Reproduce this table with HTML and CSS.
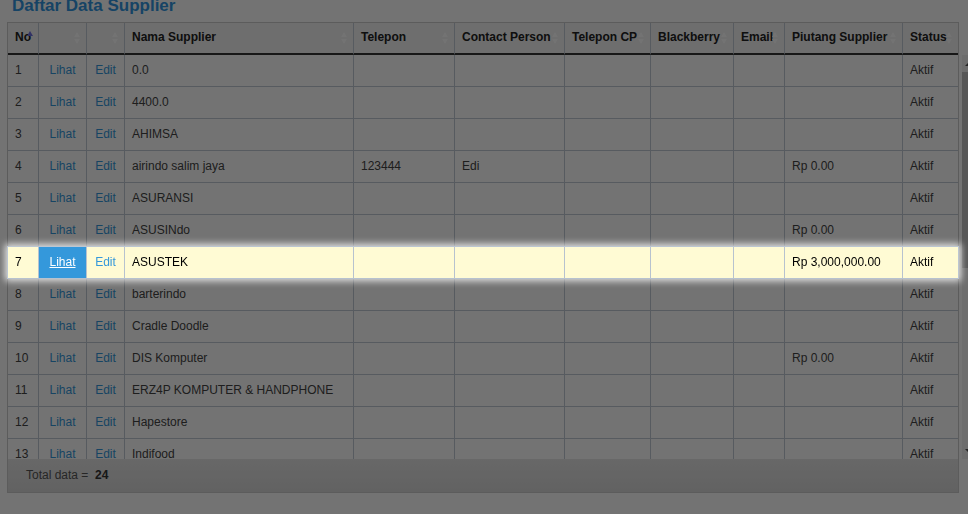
FILE: index.html
```html
<!DOCTYPE html>
<html lang="id">
<head>
  <meta charset="UTF-8">
  <meta name="viewport" content="width=device-width, initial-scale=1">
  <title>Daftar Data Supplier</title>
  <link rel="stylesheet" href="styles.css">
</head>
<body>
  <div class="page">
    <h2 class="page-title">Daftar Data Supplier</h2>

    <div class="panel">
      <!-- fixed header -->
      <div class="panel-head">
        <table class="grid">
          <colgroup>
            <col class="w-no"><col class="w-act"><col class="w-edit"><col class="w-nama">
            <col class="w-telp"><col class="w-cp"><col class="w-telpcp"><col class="w-bb">
            <col class="w-email"><col class="w-piutang"><col class="w-status">
          </colgroup>
          <thead>
            <tr>
              <th class="sort-asc">No</th>
              <th class="sort"></th>
              <th class="sort"></th>
              <th class="sort">Nama Supplier</th>
              <th class="sort">Telepon</th>
              <th class="sort">Contact Person</th>
              <th class="sort">Telepon CP</th>
              <th class="sort">Blackberry</th>
              <th class="sort">Email</th>
              <th class="sort">Piutang Supplier</th>
              <th class="sort">Status</th>
            </tr>
          </thead>
        </table>
      </div>

      <!-- scrolling body -->
      <div class="panel-body">
        <div class="body-scroll">
          <table class="grid">
            <colgroup>
              <col class="w-no"><col class="w-act"><col class="w-edit"><col class="w-nama">
              <col class="w-telp"><col class="w-cp"><col class="w-telpcp"><col class="w-bb">
              <col class="w-email"><col class="w-piutang"><col class="w-status">
            </colgroup>
            <tbody>
              <tr><td>1</td><td class="act"><a href="#">Lihat</a></td><td class="act"><a href="#">Edit</a></td><td>0.0</td><td></td><td></td><td></td><td></td><td></td><td></td><td>Aktif</td></tr>
              <tr><td>2</td><td class="act"><a href="#">Lihat</a></td><td class="act"><a href="#">Edit</a></td><td>4400.0</td><td></td><td></td><td></td><td></td><td></td><td></td><td>Aktif</td></tr>
              <tr><td>3</td><td class="act"><a href="#">Lihat</a></td><td class="act"><a href="#">Edit</a></td><td>AHIMSA</td><td></td><td></td><td></td><td></td><td></td><td></td><td>Aktif</td></tr>
              <tr><td>4</td><td class="act"><a href="#">Lihat</a></td><td class="act"><a href="#">Edit</a></td><td>airindo salim jaya</td><td>123444</td><td>Edi</td><td></td><td></td><td></td><td>Rp 0.00</td><td>Aktif</td></tr>
              <tr><td>5</td><td class="act"><a href="#">Lihat</a></td><td class="act"><a href="#">Edit</a></td><td>ASURANSI</td><td></td><td></td><td></td><td></td><td></td><td></td><td>Aktif</td></tr>
              <tr><td>6</td><td class="act"><a href="#">Lihat</a></td><td class="act"><a href="#">Edit</a></td><td>ASUSINdo</td><td></td><td></td><td></td><td></td><td></td><td>Rp 0.00</td><td>Aktif</td></tr>
              <tr class="is-focus"><td>7</td><td class="act is-hover"><a href="#">Lihat</a></td><td class="act"><a href="#">Edit</a></td><td>ASUSTEK</td><td></td><td></td><td></td><td></td><td></td><td>Rp 3,000,000.00</td><td>Aktif</td></tr>
              <tr><td>8</td><td class="act"><a href="#">Lihat</a></td><td class="act"><a href="#">Edit</a></td><td>barterindo</td><td></td><td></td><td></td><td></td><td></td><td></td><td>Aktif</td></tr>
              <tr><td>9</td><td class="act"><a href="#">Lihat</a></td><td class="act"><a href="#">Edit</a></td><td>Cradle Doodle</td><td></td><td></td><td></td><td></td><td></td><td></td><td>Aktif</td></tr>
              <tr><td>10</td><td class="act"><a href="#">Lihat</a></td><td class="act"><a href="#">Edit</a></td><td>DIS Komputer</td><td></td><td></td><td></td><td></td><td></td><td>Rp 0.00</td><td>Aktif</td></tr>
              <tr><td>11</td><td class="act"><a href="#">Lihat</a></td><td class="act"><a href="#">Edit</a></td><td>ERZ4P KOMPUTER &amp; HANDPHONE</td><td></td><td></td><td></td><td></td><td></td><td></td><td>Aktif</td></tr>
              <tr><td>12</td><td class="act"><a href="#">Lihat</a></td><td class="act"><a href="#">Edit</a></td><td>Hapestore</td><td></td><td></td><td></td><td></td><td></td><td></td><td>Aktif</td></tr>
              <tr><td>13</td><td class="act"><a href="#">Lihat</a></td><td class="act"><a href="#">Edit</a></td><td>Indifood</td><td></td><td></td><td></td><td></td><td></td><td></td><td>Aktif</td></tr>
            </tbody>
          </table>
        </div>
        <div class="vscroll">
          <span class="vscroll-btn up"></span>
          <span class="vscroll-thumb"></span>
          <span class="vscroll-track"></span>
          <span class="vscroll-btn down"></span>
        </div>
      </div>

      <div class="panel-foot">Total data = &nbsp;<b>24</b></div>
    </div>
  </div>

  <!-- guided tour layers -->
  <div class="tour-overlay"></div>
  <div class="tour-helper"></div>

  <script>
    // Put the helper layer under the row the tour points at
    const focusRow = document.querySelector('tr.is-focus');
    const helper = document.querySelector('.tour-helper');
    const r = focusRow.getBoundingClientRect();
    helper.style.left = (r.left - 1) + 'px';
    helper.style.top = (r.top - 1) + 'px';
    helper.style.width = (r.width + 2) + 'px';
    helper.style.height = (r.height + 1) + 'px';
  </script>
</body>
</html>
```

FILE: styles.css
```css
*, *::before, *::after { box-sizing: border-box; }
html, body { overflow: hidden; }
body {
  margin: 0; background: #fff; color: #444;
  font: 12px/15px "Liberation Sans", Arial, sans-serif;
}
.page { padding-left: 7px; }
.page-title {
  margin: -4px 0 6px 5px;
  font-size: 17px; line-height: 20px; font-weight: bold;
  color: #3296e0;
}

/* Panel */
.panel { width: 952px; border: 1px solid #ccc; }
.panel-body { display: flex; height: 404px; }
.body-scroll { flex: none; width: 950px; overflow: hidden; }
.panel-foot {
  height: 33px; padding: 0 18px; line-height: 33px;
  background: linear-gradient(#e6e6e6, #d9d9d9); color: #555;
}
.panel-foot b { color: #333; }

/* Grid */
.grid {
  width: 950px; table-layout: fixed;
  border-collapse: separate; border-spacing: 0;
}
.w-no { width: 30px; }
.w-act { width: 48px; }
.w-edit { width: 38px; }
.w-nama { width: 229px; }
.w-telp { width: 101px; }
.w-cp { width: 110px; }
.w-telpcp { width: 86px; }
.w-bb { width: 83px; }
.w-email { width: 51px; }
.w-piutang { width: 118px; }
.w-status { width: 56px; }
.grid th, .grid td {
  padding: 8px 7px; text-align: left; white-space: nowrap;
  border-left: 1px solid #c2cad4; border-bottom: 1px solid #c2cad4;
}
.grid th:first-child, .grid td:first-child { border-left: 0; }
.grid th {
  position: relative; padding: 7px 7px 8px;
  background: #f3f3f3; color: #222; font-weight: bold;
  border-bottom: 2px solid #333;
}
.grid a { color: #3498db; text-decoration: none; }
.grid td.act { padding-left: 0; padding-right: 0; text-align: center; }

/* Sort arrows */
.grid th.sort::before, .grid th.sort::after, .grid th.sort-asc::before {
  content: ""; position: absolute; right: 6px;
  border-left: 3px solid transparent; border-right: 3px solid transparent;
}
.grid th.sort::before { top: 9px; border-bottom: 5px solid #fff; }
.grid th.sort::after { top: 16px; border-top: 5px solid #fff; }
.grid th.sort-asc::before { top: 8px; right: 5px; border-bottom: 5px solid #7070e0; }

/* Fake scrollbar of the body */
.vscroll {
  flex: none; width: 17px; margin-left: 4px;
  display: flex; flex-direction: column; background: #f1f1f1;
}
.vscroll-btn { height: 17px; display: flex; align-items: center; padding-left: 3px; }
.vscroll-btn::before {
  content: ""; border-left: 4px solid transparent; border-right: 4px solid transparent;
}
.vscroll-btn.up::before { border-bottom: 4px solid #505050; }
.vscroll-btn.down::before { border-top: 4px solid #505050; }
.vscroll-thumb { height: 196px; background: #c1c1c1; }
.vscroll-track { flex: 1; }

/* Guided tour */
.tour-overlay {
  position: fixed; inset: 0; z-index: 10;
  background: rgba(0, 0, 0, .55);
}
.tour-helper {
  position: absolute; z-index: 11;
  background: #fffbd4; border: 1px solid #bcc6d2;
  box-shadow: 0 0 7px 2px rgba(255, 255, 255, .8);
}
.grid tr.is-focus td {
  position: relative; z-index: 12; color: #000;
  border-left-color: #b7c2cf; border-bottom-color: #b7c2cf;
}
.grid tr.is-focus td.is-hover { background: #3498db; }
.grid tr.is-focus td.is-hover a { color: #fff; text-decoration: underline; }
```
